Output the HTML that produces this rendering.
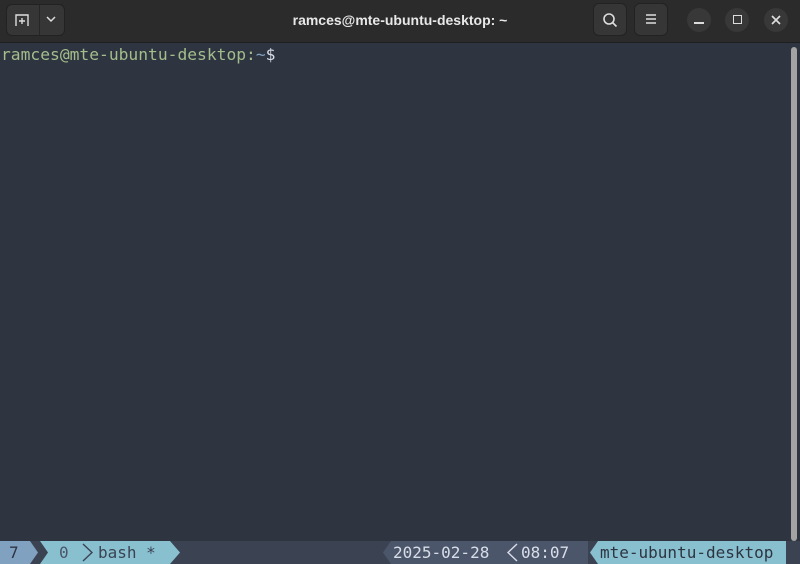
<!DOCTYPE html>
<html style="width:800px;height:564px;overflow:hidden"><head><style>
*{margin:0;padding:0;box-sizing:border-box}
html,body{width:800px;height:564px;overflow:hidden}
body{background:#2e3440;position:relative;font-family:"DejaVu Sans Mono","Liberation Mono",monospace}
.hdr{position:absolute;left:0;top:0;width:800px;height:43px;background:#2b2b2b;border-bottom:1px solid #1e1e1e}
.title{position:absolute;left:0;width:800px;top:12px;text-align:center;color:#e8e8e8;font:bold 14px "Liberation Sans",sans-serif}
.btn{position:absolute;background:#363636;border-radius:6px;border:1px solid #222}
.circ{position:absolute;width:24px;height:24px;border-radius:12px;background:#383838;top:8px}
.prompt{position:absolute;left:1px;top:45px;font-size:16.3px;color:#a3be8c;white-space:pre}
.sb{position:absolute;left:0;top:541px;width:800px;height:23px;background:#3b4252;font-size:16px;line-height:23px;white-space:pre}
.sb div{position:absolute;top:0;height:23px}
.scroll{position:absolute;left:791px;top:47px;width:6px;height:494px;background:#a3a3a3;border-radius:3px}
</style></head><body>
<div class="hdr">
 <div class="btn" style="left:6px;top:4px;width:59px;height:32px"></div>
 <div style="position:absolute;left:39px;top:5px;width:1px;height:30px;background:#262626"></div>
 <svg style="position:absolute;left:14px;top:12px" width="16" height="16" viewBox="0 0 16 16" fill="none" stroke="#ddd" stroke-width="1.4"><path d="M2 14V3h12v11M8 6v6M5 9h6"/></svg>
 <svg style="position:absolute;left:45px;top:14px" width="12" height="10" viewBox="0 0 12 10" fill="none" stroke="#ddd" stroke-width="1.5"><path d="M2 3l4 4 4-4"/></svg>
 <div class="title">ramces@mte-ubuntu-desktop: ~</div>
 <div class="btn" style="left:593px;top:3px;width:34px;height:33px"></div>
 <svg style="position:absolute;left:601px;top:11px" width="18" height="18" viewBox="0 0 18 18" fill="none" stroke="#ddd" stroke-width="1.6"><circle cx="8" cy="8" r="5"/><path d="M11.5 11.5l4 4"/></svg>
 <div class="btn" style="left:634px;top:3px;width:34px;height:33px"></div>
 <svg style="position:absolute;left:644px;top:12px" width="14" height="14" viewBox="0 0 14 14" stroke="#ddd" stroke-width="1.5"><path d="M2 3h10M2 7h10M2 11h10"/></svg>
 <div class="circ" style="left:687px"></div>
 <div style="position:absolute;left:694px;top:22px;width:10px;height:2px;background:#ddd"></div>
 <div class="circ" style="left:725px"></div>
 <div style="position:absolute;left:733px;top:15px;width:9px;height:9px;border:1.6px solid #ddd"></div>
 <div class="circ" style="left:764px"></div>
 <svg style="position:absolute;left:771px;top:15px" width="10" height="10" viewBox="0 0 10 10" stroke="#ddd" stroke-width="1.7"><path d="M1 1l8 8M9 1l-8 8"/></svg>
</div>
<div class="prompt">ramces@mte-ubuntu-desktop:<span style="color:#81a1c1">~</span><span style="color:#d8dee9">$</span></div>
<div class="scroll"></div>
<div class="sb">
 <svg style="position:absolute;left:0;top:0" width="800" height="23">
  <polygon points="0,0 30,0 38,11.5 30,23 0,23" fill="#81a1c1"/>
  <polygon points="40,0 170,0 180,11.5 170,23 40,23 48,11.5" fill="#88c0d0"/>
  <polygon points="391,0 588,0 588,23 391,23 383,11.5" fill="#4c566a"/>
  <polygon points="598,0 786,0 786,23 598,23 590,11.5" fill="#88c0d0"/>
  <path d="M83 3l9 8.5-9 8.5" fill="none" stroke="#3b4252" stroke-width="1.4"/>
  <path d="M517 3l-9 8.5 9 8.5" fill="none" stroke="#d8dee9" stroke-width="1.4"/>
 </svg>
 <div style="left:9px;color:#2e3440">7</div>
 <div style="left:59px;color:#4c566a">0</div>
 <div style="left:98px;color:#3b4252">bash *</div>
 <div style="left:393px;color:#d8dee9">2025-02-28</div>
 <div style="left:521px;color:#d8dee9">08:07</div>
 <div style="left:600px;color:#2e3440">mte-ubuntu-desktop</div>
</div>
</body></html>
